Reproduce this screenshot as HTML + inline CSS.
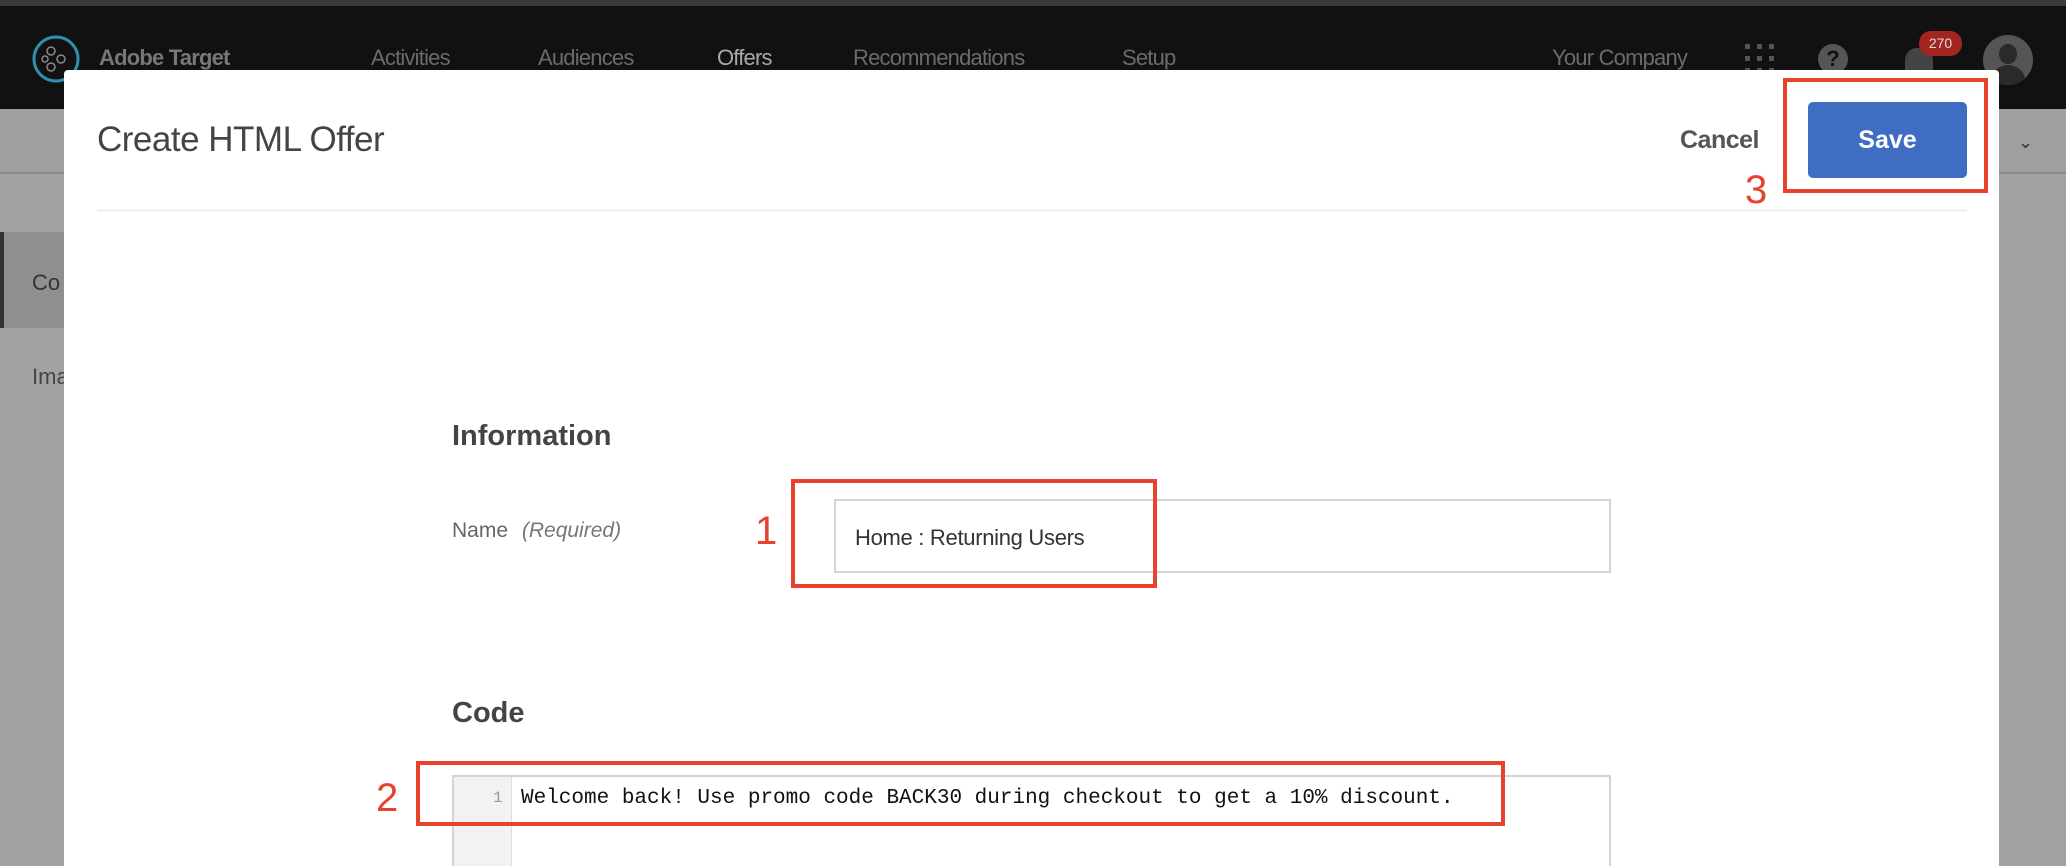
<!DOCTYPE html>
<html style="width:2066px;height:866px;overflow:hidden"><head><meta charset="utf-8"><style>
*{margin:0;padding:0;box-sizing:border-box}
body{width:2066px;height:866px;overflow:hidden;position:relative;background:#a2a2a2;font-family:"Liberation Sans",sans-serif}
.a{position:absolute}
.nav{left:0;top:0;width:2066px;height:109px;background:#111;border-top:6px solid #3a3a3c}
.nv{top:45px;font-size:22px;color:#6b6b6b;letter-spacing:-0.8px}
.red{border:4px solid #e8412c}
.num{color:#e8412c;font-size:40px}
</style></head><body>
<div class="a nav"></div>
<svg class="a" style="left:31px;top:34px" width="50" height="50" viewBox="0 0 50 50"><circle cx="25" cy="25" r="22" fill="none" stroke="#2f8fb0" stroke-width="3"/><circle cx="20" cy="17" r="4" fill="none" stroke="#888" stroke-width="1.5"/><circle cx="30" cy="25" r="4" fill="none" stroke="#888" stroke-width="1.5"/><circle cx="20" cy="33" r="4" fill="none" stroke="#888" stroke-width="1.5"/><circle cx="14" cy="25" r="3" fill="none" stroke="#888" stroke-width="1.5"/></svg>
<div class="a nv" style="left:99px;color:#777;font-weight:bold">Adobe Target</div>
<div class="a nv" style="left:371px">Activities</div>
<div class="a nv" style="left:538px">Audiences</div>
<div class="a nv" style="left:717px;color:#aaa">Offers</div>
<div class="a nv" style="left:853px">Recommendations</div>
<div class="a nv" style="left:1122px">Setup</div>
<div class="a nv" style="left:1552px">Your Company</div>
<svg class="a" style="left:1743px;top:42px" width="34" height="34"><g fill="#555"><rect x="2" y="2" width="5" height="5"/><rect x="14" y="2" width="5" height="5"/><rect x="26" y="2" width="5" height="5"/><rect x="2" y="14" width="5" height="5"/><rect x="14" y="14" width="5" height="5"/><rect x="26" y="14" width="5" height="5"/><rect x="2" y="26" width="5" height="5"/><rect x="14" y="26" width="5" height="5"/><rect x="26" y="26" width="5" height="5"/></g></svg>
<div class="a" style="left:1818px;top:44px;width:30px;height:30px;border-radius:50%;background:#555;color:#111;font-weight:bold;font-size:22px;text-align:center;line-height:30px">?</div>
<div class="a" style="left:1905px;top:48px;width:28px;height:28px;border-radius:12px 12px 3px 3px;background:#444"></div>
<div class="a" style="left:1919px;top:31px;width:43px;height:25px;border-radius:12px;background:#a32520;color:#ddd;font-size:14px;text-align:center;line-height:25px">270</div>
<div class="a" style="left:1983px;top:35px;width:50px;height:50px;border-radius:50%;background:#555;overflow:hidden"><div class="a" style="left:16px;top:9px;width:18px;height:20px;border-radius:50%;background:#2a2a2a"></div><div class="a" style="left:8px;top:30px;width:34px;height:30px;border-radius:50%;background:#2a2a2a"></div></div>
<div class="a" style="left:0;top:109px;width:2066px;height:65px;background:#9f9f9f;border-bottom:2px solid #8a8a8a"></div>
<div class="a" style="left:2018px;top:132px;color:#333;font-size:18px">&#8964;</div>
<div class="a" style="left:0;top:232px;width:70px;height:96px;background:#8f8f8f;border-left:4px solid #333"></div>
<div class="a" style="left:32px;top:270px;font-size:22px;color:#333">Co</div>
<div class="a" style="left:32px;top:364px;font-size:22px;color:#444">Ima</div>
<div class="a" style="left:64px;top:70px;width:1935px;height:796px;background:#fff;border-radius:4px 4px 0 0"></div>
<div class="a" style="left:97px;top:120px;font-size:35px;color:#444;letter-spacing:-0.5px">Create HTML Offer</div>
<div class="a" style="left:97px;top:209px;width:1870px;height:3px;background:#f3f3f3"></div>
<div class="a" style="left:1680px;top:126px;font-size:25px;color:#555;font-weight:bold;letter-spacing:-0.5px">Cancel</div>
<div class="a" style="left:1808px;top:102px;width:159px;height:76px;background:#3e6dc2;border-radius:5px;color:#fff;font-weight:bold;font-size:25px;text-align:center;line-height:76px">Save</div>
<div class="a red" style="left:1783px;top:78px;width:205px;height:115px"></div>
<div class="a num" style="left:1745px;top:168px">3</div>
<div class="a" style="left:452px;top:420px;font-size:29px;font-weight:bold;color:#444">Information</div>
<div class="a" style="left:452px;top:519px;font-size:21px;color:#666">Name <i style="margin-left:8px;color:#777">(Required)</i></div>
<div class="a" style="left:834px;top:499px;width:777px;height:74px;border:2px solid #d4d4d4"></div>
<div class="a" style="left:855px;top:525px;font-size:22px;color:#333;letter-spacing:-0.3px">Home : Returning Users</div>
<div class="a red" style="left:791px;top:479px;width:366px;height:109px"></div>
<div class="a num" style="left:755px;top:509px">1</div>
<div class="a" style="left:452px;top:697px;font-size:29px;font-weight:bold;color:#444">Code</div>
<div class="a" style="left:452px;top:775px;width:1159px;height:91px;border:2px solid #d4d4d4;border-bottom:none"></div>
<div class="a" style="left:454px;top:777px;width:58px;height:89px;background:#f2f2f2;border-right:1px solid #ddd"></div>
<div class="a" style="left:493px;top:789px;font-family:'Liberation Mono',monospace;font-size:16px;color:#999">1</div>
<div class="a" style="left:521px;top:787px;font-family:'Liberation Mono',monospace;font-size:21px;color:#111;white-space:pre">Welcome back! Use promo code BACK30 during checkout to get a 10% discount.</div>
<div class="a red" style="left:416px;top:761px;width:1089px;height:65px"></div>
<div class="a num" style="left:376px;top:776px">2</div>
</body></html>
